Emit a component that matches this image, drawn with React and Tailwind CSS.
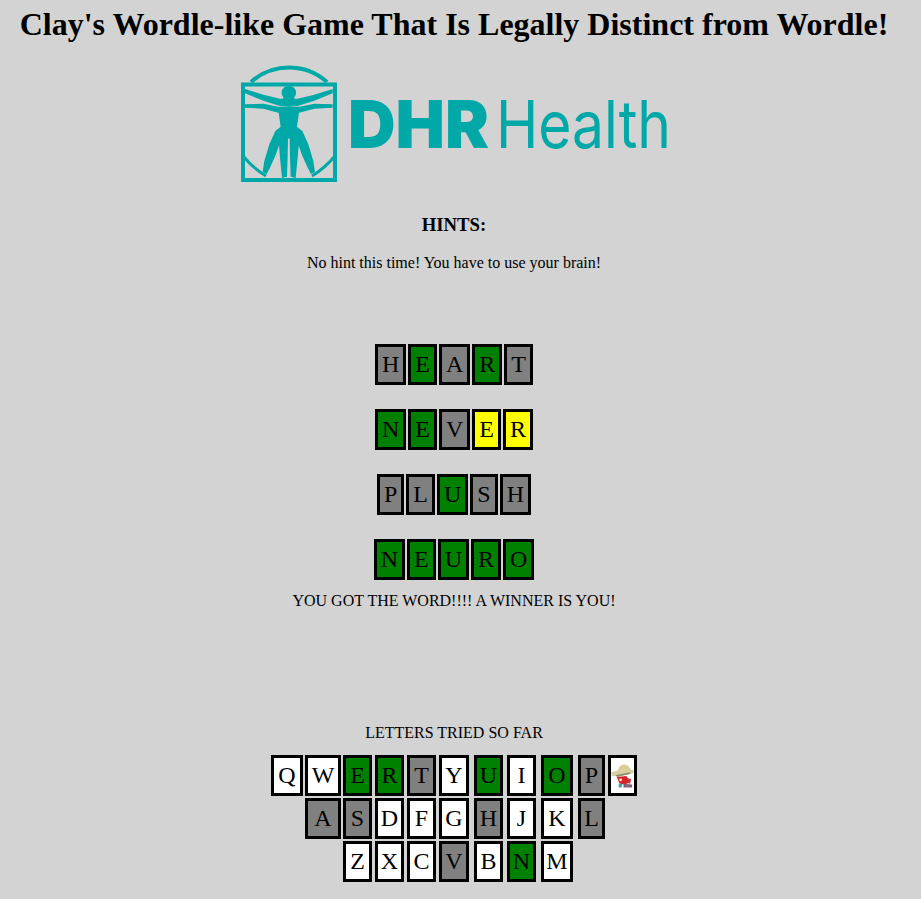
const guesses = [
  [['H', 'g'], ['E', 'n'], ['A', 'g'], ['R', 'n'], ['T', 'g']],
  [['N', 'n'], ['E', 'n'], ['V', 'g'], ['E', 'y'], ['R', 'y']],
  [['P', 'g'], ['L', 'g'], ['U', 'n'], ['S', 'g'], ['H', 'g']],
  [['N', 'n'], ['E', 'n'], ['U', 'n'], ['R', 'n'], ['O', 'n']],
];

// the keyboard is a table in the original: null is an empty cell
const keyRows = [
  [['Q', 'w'], ['W', 'w'], ['E', 'n'], ['R', 'n'], ['T', 'g'], ['Y', 'w'], ['U', 'n'], ['I', 'w'], ['O', 'n'], ['P', 'g'], ['img', 'w']],
  [null, ['A', 'g'], ['S', 'g'], ['D', 'w'], ['F', 'w'], ['G', 'w'], ['H', 'g'], ['J', 'w'], ['K', 'w'], ['L', 'g'], null],
  [null, null, ['Z', 'w'], ['X', 'w'], ['C', 'w'], ['V', 'g'], ['B', 'w'], ['N', 'n'], ['M', 'w'], null, null],
];

const keyWidths = [
  'w-[32px]', 'w-[36px]', 'w-[29px]', 'w-[29px]', 'w-[29px]', 'w-[30px]',
  'w-[29px]', 'w-[29px]', 'w-[32px]', 'w-[27px]', 'w-[29px]',
];

const tileColors = {
  g: 'bg-[#808080]',
  n: 'bg-[#008000]',
  y: 'bg-[#ffff00]',
  w: 'bg-white',
};

const Tile = ({ letter, color }) => (
  <span className={`block border-[3px] border-black px-[4px] py-[4px] text-[24px] leading-[27px] ${tileColors[color]}`}>
    {letter}
  </span>
);

const Mascot = () => (
  <svg width="24" height="26" viewBox="0 0 24 26">
    <path d="M7 8 Q8 1 14 1 Q20 2 21 8 Z" fill="#d9cf94" />
    <path d="M0 9 Q11 5 24 7 L23 10 Q11 13 1 13 Z" fill="#d8d0a2" />
    <path d="M5 12 L20 9 L20 11 L6 14 Z" fill="#8f8f70" />
    <path d="M6 14 L16 13 L20 19 L15 22 L9 21 Z" fill="#d8232a" />
    <path d="M16 15 L21 16 L20 21 L17 20 Z" fill="#c8323a" />
    <path d="M8 21 L12 21 L11 25 L8 25 Z" fill="#3f9fb0" />
    <path d="M13 21 L22 22 L22 25 L13 25 Z" fill="#8a5a72" />
    <circle cx="10" cy="17" r="1.5" fill="#f2e6d0" />
    <circle cx="17" cy="23" r="1" fill="#3f9fb0" />
  </svg>
);

const FigureHalf = () => (
  <g>
    {/* upper arm */}
    <path d="M45 99 L100 116 L150 128 L177 128 L177 152 L150 150 L100 134 L45 112 Z" />
    {/* lower arm */}
    <path d="M45 145 L100 143 L145 152 L177 152 L177 170 L145 170 L100 158 L45 155 Z" />
    {/* torso, hip and both legs */}
    <path d="M145 160 L177 160 L177 245 L174 250 L173 300 L171 362 L156 366 L150 305 L147 268 L138 295 L120 335 L110 354 L98 348 L103 315 L118 265 L136 225 L152 212 L148 185 Z" />
  </g>
);

const Logo = () => (
  <svg width="427" height="118" viewBox="241 64 427 118" className="block overflow-visible">
    <g fill="none" stroke="#00a9a7">
      <rect x="243" y="83.5" width="92" height="95.5" strokeWidth="4" />
      <path d="M251 81 A57 57 0 0 1 327 81" strokeWidth="4" />
      <path d="M244 156 Q253 167 266 175" strokeWidth="3" />
      <path d="M334 156 Q325 167 312 175" strokeWidth="3" />
    </g>
    <g fill="#00a9a7" transform="translate(230 55) scale(0.3333)">
      <ellipse cx="176.5" cy="110" rx="22" ry="21" />
      <rect x="160" y="120" width="33" height="20" />
      <FigureHalf />
      <g transform="matrix(-1 0 0 1 353 0)">
        <FigureHalf />
      </g>
    </g>
    <text x="348" y="147" fontFamily="Inter, sans-serif" fontWeight="900" fontSize="66" fill="#00a9a7" textLength="141" lengthAdjust="spacingAndGlyphs">
      DHR
    </text>
    <text x="496" y="147" fontFamily="Inter, sans-serif" fontWeight="400" fontSize="66" fill="#00a9a7" textLength="175" lengthAdjust="spacingAndGlyphs">
      Health
    </text>
  </svg>
);

const App = () => {
  return (
    <div className="min-h-[899px] bg-[#d3d3d3] text-black" style={{ fontFamily: '"Liberation Serif", serif' }}>
      <div className="flex w-[908px] flex-col items-center pt-[6px]">
        <h1 className="text-center text-[32px] font-bold leading-[37px]">
          Clay's Wordle-like Game That Is Legally Distinct from Wordle!
        </h1>
        <div className="mt-[22px]">
          <Logo />
        </div>
        <h3 className="mt-[31px] text-[18.72px] font-bold leading-[21px]">HINTS:</h3>
        <p className="mt-[19px] text-base leading-[18px]">No hint this time! You have to use your brain!</p>

        <div className="mt-[72px] flex flex-col items-center gap-6">
          {guesses.map((word, i) => (
            <div key={i} className="flex gap-[2px]">
              {word.map(([letter, color], j) => (
                <Tile key={j} letter={letter} color={color} />
              ))}
            </div>
          ))}
        </div>

        <p className="mt-[12px] text-base leading-[18px]">YOU GOT THE WORD!!!! A WINNER IS YOU!</p>
        <p className="mt-[114px] text-base leading-[18px]">LETTERS TRIED SO FAR</p>

        <div className="mt-[13px] grid grid-cols-[34px_38px_32px_32px_32px_35px_33px_34px_37px_30px_29px] gap-y-[2px] text-center">
          {keyRows.flatMap((row, i) =>
            row.map((key, j) => {
              if (!key) return <span key={`${i}-${j}`} />;
              const [letter, color] = key;
              return (
                <div key={`${i}-${j}`} className={keyWidths[j]}>
                  {letter === 'img' ? (
                    <span className="flex h-[41px] items-center justify-center border-[3px] border-black bg-white">
                      <Mascot />
                    </span>
                  ) : (
                    <span className={`block border-[3px] border-black py-[4px] text-[24px] leading-[27px] ${tileColors[color]}`}>
                      {letter}
                    </span>
                  )}
                </div>
              );
            })
          )}
        </div>
      </div>
    </div>
  );
};

export default App;
